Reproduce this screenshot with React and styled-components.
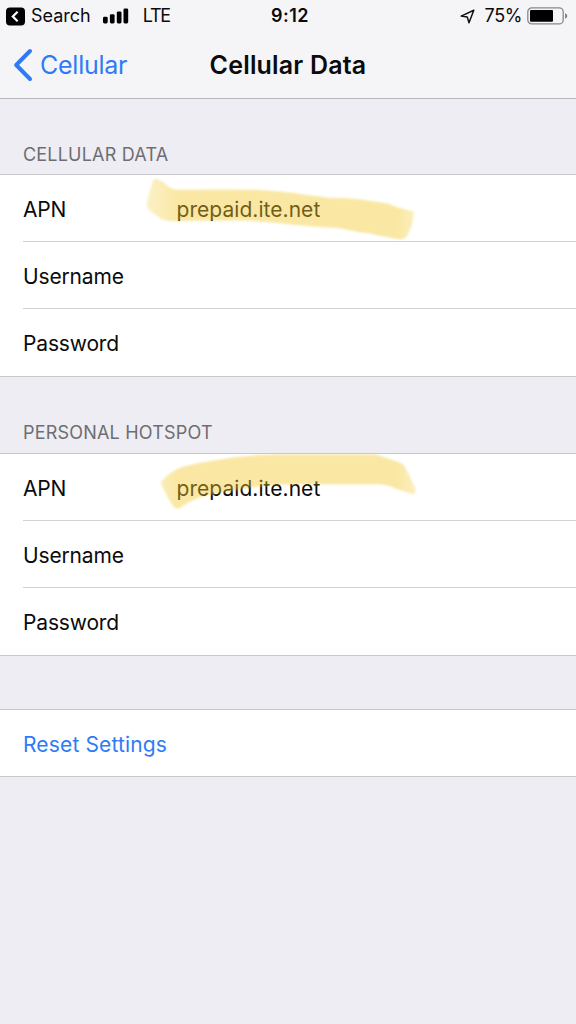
import React from "react";
import styled, { createGlobalStyle } from "styled-components";

const GlobalStyle = createGlobalStyle`
  * { box-sizing: border-box; }
  body { margin: 0; background: #eeedf3; }
`;

const Screen = styled.main`
  width: 576px;
  height: 1024px;
  overflow: hidden;
  background: #eeedf3;
  color: #0b0b0c;
  font-family: Inter, "Liberation Sans", sans-serif;
  display: flex;
  flex-direction: column;
`;

const Header = styled.header`
  height: 99px;
  flex: none;
  background: #f5f5f7;
  border-bottom: 1px solid #b5b5b8;
`;

const StatusBar = styled.div`
  height: 32px;
  padding: 0 8px 0 6px;
  display: grid;
  grid-template-columns: 1fr auto 1fr;
  align-items: center;
  font-size: 18px;
  line-height: 32px;
`;

const StatusSide = styled.div`
  display: flex;
  align-items: center;
  justify-content: ${(p) => (p.$end ? "flex-end" : "flex-start")};
`;

const StatusText = styled.span`
  font-size: ${(p) => p.$size || 18}px;
  letter-spacing: ${(p) => p.$track || 0}px;
  margin-left: ${(p) => p.$gap || 0}px;
  font-weight: ${(p) => p.$weight || 400};
`;

const Icon = styled.svg`
  display: block;
  flex: none;
  margin-left: ${(p) => p.$gap || 0}px;
`;

const NavBar = styled.nav`
  height: 66px;
  padding: 0 13px;
  display: grid;
  grid-template-columns: 1fr auto 1fr;
  align-items: center;
`;

const BackLink = styled.a`
  display: flex;
  align-items: center;
  gap: 6px;
  color: #2f7bf6;
  font-size: 25px;
  line-height: 66px;
  letter-spacing: -0.25px;
`;

const Title = styled.h1`
  margin: 0;
  font-size: 25px;
  font-weight: 600;
  line-height: 66px;
  letter-spacing: 0.18px;
`;

const SectionTitle = styled.h2`
  margin: 0;
  height: ${(p) => p.$height}px;
  flex: none;
  padding: 0 23px ${(p) => p.$base}px;
  display: flex;
  align-items: flex-end;
  color: #6d6d72;
  font-size: 18px;
  font-weight: 400;
  line-height: 22px;
  letter-spacing: 0.2px;
`;

const Group = styled.section`
  flex: none;
  background: #fff;
  border-top: 1px solid #c9c8cd;
  border-bottom: 1px solid #c9c8cd;
  margin-top: ${(p) => p.$top || 0}px;
`;

const Row = styled.div`
  position: relative;
  height: ${(p) => p.$height || 67}px;
  margin-left: 23px;
  padding-top: 3px;
  display: flex;
  align-items: center;
  font-size: 21px;
  line-height: 28px;
  & + & { border-top: 1px solid #d2d1d6; }
`;

const Label = styled.span`
  width: 153px;
  letter-spacing: -0.15px;
`;

const Value = styled.span`
  margin-left: 0.5px;
  letter-spacing: 0.05px;
`;

const ResetButton = styled.button`
  border: 0;
  padding: 0;
  background: none;
  font: inherit;
  color: #2f7bf6;
  letter-spacing: 0.15px;
`;

const Marker = styled.svg`
  position: absolute;
  left: 117.5px;
  top: 0.5px;
  pointer-events: none;
  filter: blur(0.9px);
  opacity: 0.43;
`;

const STROKES = {
  down: "M16 3 Q22 5 26 9.5 Q30 13.5 37 13.7 C75 13.5 105 13 125 14.5 Q148 16 163 18.5 L190 22 Q208 21.5 220 23.5 L247 27.5 L257 31.5 L273 35.5 Q272 51 266 60 Q263 64 257 63 L237 59.5 Q229 56.5 220 56.5 L197 52 Q170 50.5 150 48.5 Q120 45 100 44.5 L37 45 Q28 46 20 43 L8 34 Q5 31 6 25 L11.5 6 Q13 2 16 3Z",
  up: "M20 27 Q29 16 41 12 Q57 7.5 73 5.5 Q106 -0.5 137 -0.5 L235 -0.5 L260 8 Q264 10 266 16 L274.5 33 Q276 39 271 39 L257 34.5 Q247 29.5 238 29.3 L177 29.3 Q150 29 130 30.3 Q110 32 90 36.3 Q70 39 57 43 Q47 47 38 53.5 Q34 54 32 51 L27 43 L20.5 30Z",
};

function Highlight({ kind }) {
  const fade = `fade-${kind}`;
  return (
    <Marker width="290" height="67" viewBox="0 0 290 67" overflow="visible">
      <defs>
        <linearGradient id={fade} gradientUnits="userSpaceOnUse" x1="5" y1="0" x2="276" y2="0">
          <stop offset="0" stopColor="#f3c92c" stopOpacity="0.6" />
          <stop offset="0.12" stopColor="#f3c92c" />
          <stop offset="0.93" stopColor="#f3c92c" />
          <stop offset="1" stopColor="#f3c92c" stopOpacity="0.65" />
        </linearGradient>
      </defs>
      <path d={STROKES[kind]} fill={`url(#${fade})`} />
    </Marker>
  );
}

function FieldGroup({ highlight }) {
  return (
    <Group>
      <Row $height={66}>
        <Label>APN</Label>
        <Value>prepaid.ite.net</Value>
        <Highlight kind={highlight} />
      </Row>
      <Row>
        <Label>Username</Label>
      </Row>
      <Row $height={68}>
        <Label>Password</Label>
      </Row>
    </Group>
  );
}

export default function App() {
  return (
    <Screen>
      <GlobalStyle />
      <Header>
        <StatusBar>
          <StatusSide>
            <Icon width="19" height="19" viewBox="0 0 19 19">
              <rect width="19" height="18" y="0.5" rx="4" fill="#000" />
              <path d="M11.6 4.8 6.8 9.5 11.6 14.2" fill="none" stroke="#fff" strokeWidth="2.2" />
            </Icon>
            <StatusText $gap={6}>Search</StatusText>
            <Icon $gap={12} width="26" height="16" viewBox="0 0 26 16">
              <rect x="0" y="8.8" width="4.7" height="6.7" rx="1.4" />
              <rect x="6.9" y="6.2" width="4.7" height="9.3" rx="1.4" />
              <rect x="13.8" y="3.4" width="4.7" height="12.1" rx="1.4" />
              <rect x="20.5" y="0.5" width="4.7" height="15" rx="1.4" />
            </Icon>
            <StatusText $gap={14} $track={-1.3}>LTE</StatusText>
          </StatusSide>
          <StatusText $weight={600} $track={0.5} $gap={6}>9:12</StatusText>
          <StatusSide $end>
            <Icon width="15" height="15" viewBox="0 0 15 15">
              <path d="M13.8 1.2 1.2 7.1 7.2 7.9 9 13.7Z" fill="none" stroke="#111" strokeWidth="1.5" strokeLinejoin="round" />
            </Icon>
            <StatusText $gap={10} $track={-0.4}>75%</StatusText>
            <Icon $gap={5} width="41" height="18" viewBox="0 0 41 18">
              <rect x="0.8" y="0.9" width="35.4" height="16" rx="4" fill="none" stroke="#88888b" strokeWidth="1.3" />
              <rect x="3" y="3" width="23" height="11.8" rx="1" fill="#000" />
              <path d="M38 6.2 Q40.4 7 40.4 9 T38 11.8Z" fill="#88888b" />
            </Icon>
          </StatusSide>
        </StatusBar>
        <NavBar>
          <BackLink>
            <Icon width="21" height="34" viewBox="0 0 21 34">
              <path d="M17 3 3.2 17 17 31" fill="none" stroke="#2f7bf6" strokeWidth="4" strokeLinecap="round" strokeLinejoin="round" />
            </Icon>
            Cellular
          </BackLink>
          <Title>Cellular Data</Title>
        </NavBar>
      </Header>
      <SectionTitle $height={75} $base={8}>CELLULAR DATA</SectionTitle>
      <FieldGroup highlight="down" />
      <SectionTitle $height={76} $base={8.6}>PERSONAL HOTSPOT</SectionTitle>
      <FieldGroup highlight="up" />
      <Group $top={53}>
        <Row $height={66}>
          <ResetButton>Reset Settings</ResetButton>
        </Row>
      </Group>
    </Screen>
  );
}
